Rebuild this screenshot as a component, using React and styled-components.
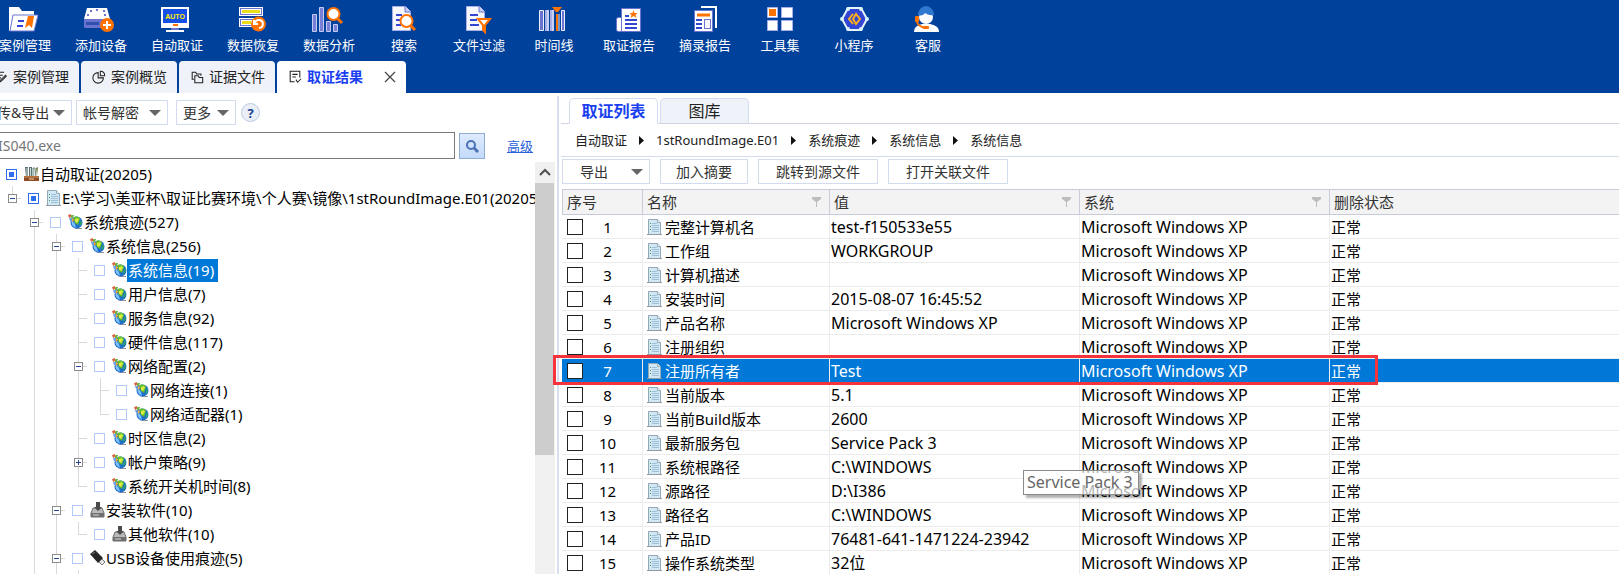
import React from 'react';
import styled, { createGlobalStyle, css } from 'styled-components';

const GlobalStyle = createGlobalStyle`
  *, *::before, *::after { box-sizing: border-box; }
  html, body { margin: 0; height: 100%; overflow: hidden; background: #fff; }
  #root { height: 100%; }
  body, button, input, table {
    font-family: "Noto Sans", "Noto Sans CJK SC", sans-serif;
  }
  button { margin: 0; padding: 0; border: 0; background: none; color: inherit; white-space: nowrap; }
`;

/* ---------- shell ---------- */

const Shell = styled.div`
  display: flex;
  flex-direction: column;
  height: 100vh;
  overflow: hidden;
  color: #222;
`;

const Header = styled.header`
  flex: none;
  overflow: hidden;
  background: #00419c;
`;

const Toolbar = styled.nav`
  display: flex;
  height: 61px;
  margin-left: -13px;
`;

const ToolButton = styled.button`
  display: flex;
  flex-direction: column;
  align-items: center;
  flex: none;
  width: ${(p) => (p.$wide ? 76 : 74)}px;
  padding-top: 6px;
  color: #fff;
  font-size: 13px;
  line-height: 20px;

  svg { width: 30px; height: 28px; overflow: visible; margin-bottom: 1px; }
`;

const TabStrip = styled.div`
  display: flex;
  gap: 2px;
  height: 32px;
  margin-left: -17px;
`;

const PageTab = styled.button`
  display: flex;
  align-items: center;
  flex: none;
  gap: 5px;
  padding: 0 10px 0 11px;
  border-radius: 4px 4px 0 0;
  background: #eff3f9;
  color: #222;
  font-size: 14px;
  line-height: 20px;

  svg { width: 14px; height: 14px; flex: none; }

  ${(p) =>
    p.$active &&
    css`
      background: #fff;
      color: #1a3ff0;
      font-weight: 700;
      svg { color: #222; }
    `}
`;

const CloseMark = styled.span`
  display: flex;
  margin: 0 -1px 0 15px;
`;

const Body = styled.div`
  display: flex;
  flex: 1;
  min-height: 0;
`;

/* ---------- left panel ---------- */

const Sidebar = styled.aside`
  display: flex;
  flex-direction: column;
  flex: none;
  width: 557px;
  min-height: 0;
  overflow: hidden;
`;

const FilterBar = styled.div`
  display: flex;
  align-items: center;
  gap: 4px;
  height: 39px;
  margin-left: -24px;
`;

const MoreGroup = styled.div`
  display: flex;
  align-items: center;
  gap: 5px;
  margin-left: 4px;
`;

const PanelButton = styled.button`
  display: flex;
  align-items: center;
  justify-content: ${(p) => (p.$menu ? 'space-between' : 'center')};
  flex: none;
  width: ${(p) => p.$width}px;
  height: 25px;
  padding: ${(p) => (p.$menu ? '0 6px' : '0')};
  border: 1px solid #d3dcee;
  background: #fff;
  color: #333;
  font-size: 14px;
  line-height: 20px;

  span {
    flex: ${(p) => (p.$centered ? 1 : 'none')};
    padding-right: ${(p) => (p.$centered ? 12 : 0)}px;
  }
  svg { width: 12px; height: 6px; fill: #666; }
`;

const HelpButton = styled.button`
  width: 19px;
  height: 19px;
  border: 1px solid #bccbe2;
  border-radius: 50%;
  background: #e9eef7;
  color: #173f8f;
  font-size: 13px;
  font-weight: 700;
  line-height: 16px;
`;

const SearchRow = styled.div`
  display: flex;
  align-items: center;
  height: 27px;
`;

const SearchInput = styled.input`
  width: 459px;
  height: 27px;
  margin-left: -4px;
  padding: 0 0 0 1px;
  border: 1px solid #7a7a7a;
  background: #fff;
  color: #777;
  font-size: 14px;
  outline: 0;
`;

const SearchButton = styled.button`
  width: 26px;
  height: 26px;
  margin: 0 22px 0 4px;
  border: 1px solid #8fadd2;
  background: linear-gradient(#dfebfd, #c3dafb);
  svg { display: block; width: 24px; height: 24px; }
`;

const AdvancedLink = styled.a`
  color: #2a62d8;
  font-size: 13px;
  line-height: 20px;
  text-decoration: underline;
`;

const TreeArea = styled.div`
  display: flex;
  flex: 1;
  min-height: 0;
  margin-top: 3px;
`;

const Tree = styled.div`
  flex: 1;
  min-width: 0;
  overflow: hidden;
`;

const TreeRow = styled.div`
  display: flex;
  align-items: center;
  height: 24px;
  padding-left: 1px;
`;

const line = 'linear-gradient(#d9d9d9, #d9d9d9)';
const guideBackground = {
  none: 'none',
  full: `${line} 11px 0 / 1px 100% no-repeat`,
  tee: `${line} 11px 0 / 1px 100% no-repeat, ${line} 11px 12px / 9px 1px no-repeat`,
  end: `${line} 11px 0 / 1px 12px no-repeat, ${line} 11px 12px / 9px 1px no-repeat`,
};

const Guide = styled.span`
  display: flex;
  align-items: center;
  flex: none;
  width: 22px;
  height: 24px;
  padding-left: 7px;
  background: ${(p) => guideBackground[p.$kind]};
`;

const Expander = styled.button`
  width: 9px;
  height: 9px;
  border: 1px solid #8c8c8c;
  background:
    linear-gradient(#24479a, #24479a) center / 5px 1px no-repeat,
    ${(p) => (p.$open ? '' : 'linear-gradient(#24479a, #24479a) center / 1px 5px no-repeat,')}
    linear-gradient(#fff, #fff);
`;

const TreeCheck = styled.input`
  appearance: none;
  flex: none;
  width: 11px;
  height: 11px;
  margin: 0 7px 0 5px;
  border: 1px solid #b4c9fb;
  background: #fff;

  &:checked {
    border-color: #2f6cf0;
    background: linear-gradient(#2f6cf0, #2f6cf0) center / 5px 5px no-repeat;
  }
`;

const NodeIcon = styled.svg`
  flex: none;
  width: 15px;
  height: 16px;
`;

const NodeLabel = styled.label`
  padding: 0 4px 0 1px;
  color: ${(p) => (p.$selected ? '#fff' : '#000')};
  background: ${(p) => (p.$selected ? '#0078d7' : 'none')};
  font-size: 15px;
  line-height: 23px;
  white-space: nowrap;
`;

const ScrollTrack = styled.div`
  display: flex;
  flex-direction: column;
  flex: none;
  width: 20px;
  margin-right: 2px;
  background: #f0f0f0;
`;

const ScrollArrow = styled.button`
  height: 21px;
  svg { display: block; width: 20px; height: 21px; }
`;

const ScrollThumb = styled.div`
  height: 66%;
  margin-right: 1px;
  background: #cdcdcd;
`;

/* ---------- right panel ---------- */

const Main = styled.main`
  display: flex;
  flex-direction: column;
  flex: 1;
  min-width: 0;
  margin-top: 3px;
  border-left: 2px solid #d6dff0;
`;

const ViewTabs = styled.div`
  display: flex;
  flex: none;
  gap: 2px;
  height: 28px;
  padding: 2px 0 0 8px;
  margin-left: 2px;
  border-bottom: 1px solid #cdd3e4;
`;

const ViewTab = styled.button`
  width: 89px;
  height: 26px;
  border: 1px solid #d3dcee;
  border-radius: 5px 5px 0 0;
  border-bottom-color: ${(p) => (p.$active ? '#fff' : '#cdd3e4')};
  background: ${(p) => (p.$active ? '#fff' : '#eff3f9')};
  color: ${(p) => (p.$active ? '#1a3ff0' : '#222')};
  font-size: 16px;
  font-weight: ${(p) => (p.$active ? 700 : 400)};
  line-height: 22px;
`;

const Breadcrumb = styled.nav`
  display: flex;
  align-items: center;
  flex: none;
  gap: 12px;
  height: 33px;
  margin-left: 2px;
  padding-left: 14px;
  border-bottom: 1px solid #d3dcee;
  color: #222;
  font-size: 13px;
  line-height: 20px;

  svg { width: 5px; height: 9px; fill: #111; }
`;

const ActionBar = styled.div`
  display: flex;
  flex: none;
  gap: 10px;
  padding: 2px 0 5px 3px;
`;

const TableArea = styled.div`
  position: relative;
  flex: 1;
  min-height: 0;
  margin-left: 3px;
`;

const DataTable = styled.table`
  width: 100%;
  table-layout: fixed;
  border-collapse: separate;
  border-spacing: 0;
  font-size: 15px;
  line-height: 20px;
`;

const HeadCell = styled.th`
  width: ${(p) => (p.$width ? `${p.$width}px` : 'auto')};
  height: 26px;
  padding: 0 0 0 4px;
  border: solid #c9cbdb;
  border-width: 1px 1px 1px 0;
  background: #f3f3f3;
  color: #333;
  font-weight: 400;
  text-align: left;

  &:first-child { border-left-width: 1px; }
  &:last-child { border-right-width: 0; }

  div { display: flex; align-items: center; justify-content: space-between; padding-right: 8px; }
  svg { width: 9px; height: 10px; fill: #bdbdbd; }
`;

const Row = styled.tr`
  color: ${(p) => (p.$selected ? '#fff' : '#000')};
  background: ${(p) => (p.$selected ? '#0078d7' : '#fff')};
`;

const Cell = styled.td`
  height: 24px;
  padding: 0 0 0 ${(p) => p.$pad || 1}px;
  border: solid #ececec;
  border-width: 0 1px 1px 0;
  font-size: ${(p) => (p.$latin ? 16 : 15)}px;
  white-space: nowrap;

  &:last-child { border-right-width: 0; }
`;

const CellFlow = styled.div`
  display: flex;
  align-items: center;
  gap: 3px;
`;

const RowCheck = styled.input`
  appearance: none;
  flex: none;
  width: 16px;
  height: 16px;
  margin: 0;
  border: 1px solid #222;
  background: #fff;
`;

const RowNumber = styled.span`
  width: 43px;
  text-align: center;
`;

const Marker = styled.div`
  position: absolute;
  top: 166px;
  left: -9px;
  width: 825px;
  height: 30px;
  border: 3px solid #f5333a;
  pointer-events: none;
`;

const Tooltip = styled.div`
  position: absolute;
  top: 281px;
  left: 461px;
  width: 116px;
  height: 25px;
  padding-left: 3px;
  border: 1px solid #8a8a8a;
  background: rgba(255, 255, 255, 0.7);
  box-shadow: 3px 3px 2px rgba(0, 0, 0, 0.3);
  color: #666;
  font-size: 16px;
  line-height: 23px;
  white-space: nowrap;
`;

/* ---------- icons ---------- */

const O = '#ff7200';
const V = '#6a74cf';
const B = '#3346d3';

const toolIcons = {
  cases: (
    <>
      <path d="M-1 1h10l3 4h12v5h4l-4 15H-1z" fill="#fff" />
      <path d="M3 9h25l-4 16H0z" fill="#fff" stroke={V} />
      <path d="M8 15h6M7 20h6" stroke={B} strokeWidth="2" />
      <path d="M18 10h6l-2 12-3-3-4 3z" fill={O} />
    </>
  ),
  addDevice: (
    <>
      <path d="M1 2h20l3 11H-2z" fill="#fff" />
      <path d="M4 5h2M10 4h2M17 5h2M1 9h2M18 9h2" stroke={V} strokeWidth="2" />
      <rect x="-2" y="13" width="26" height="9" rx="1" fill={V} />
      <rect x="0" y="16" width="13" height="3" fill="#2f4fae" />
      <circle cx="21" cy="19" r="7" fill={O} />
      <path d="M21 15v8M17 19h8" stroke="#fff" strokeWidth="2" />
    </>
  ),
  auto: (
    <>
      <rect x="-1" y="1" width="28" height="21" fill="#fff" />
      <rect x="1" y="3" width="24" height="14" fill="#1450e6" />
      <text x="13" y="13" fill="#ffee00" fontSize="7" fontWeight="700" textAnchor="middle" fontFamily="Liberation Sans, sans-serif">AUTO</text>
      <path d="M11 19h5" stroke={O} strokeWidth="2" />
      <path d="M9 22h8v2H9z" fill={V} />
      <path d="M4 25h18" stroke="#fff" strokeWidth="2" />
    </>
  ),
  restore: (
    <>
      <rect x="1.500" y="1.500" width="23" height="8" fill={V} stroke="#fff" />
      <rect x="3" y="3" width="20" height="5" fill="#fff" />
      <path d="M4 5.500h18" stroke="#e9dc18" strokeWidth="3" />
      <rect x="1.500" y="12.500" width="23" height="8" fill={V} stroke="#fff" />
      <rect x="3" y="14" width="20" height="5" fill="#fff" />
      <path d="M4 16.500h9" stroke="#e9dc18" strokeWidth="3" />
      <circle cx="20.500" cy="18" r="7.500" fill={O} />
      <path d="M17 17a4 4 0 1 1 4 5M16 14v4h4" fill="none" stroke="#fff" strokeWidth="2" />
    </>
  ),
  analysis: (
    <>
      <g fill="#7780d6" stroke="#c5caf2">
        <path d="M-1.500 8.500h4v17h-4zM5.500 1.500h4v24h-4zM12.500 15.500h4v10h-4zM19.500 18.500h4v7h-4z" />
      </g>
      <path d="M23 12l5 5" stroke={O} strokeWidth="3" />
      <circle cx="19.500" cy="8" r="6" fill="#fff" stroke={O} strokeWidth="2" />
    </>
  ),
  search: (
    <>
      <path d="M3.500.5h13l5 5v19h-18z" fill="#f6f7fd" stroke="#a9b0e8" />
      <path d="M16 0v6h6" fill="#c9cef3" stroke={V} />
      <path d="M7 9h6M7 14h5M7 19h5" stroke={B} strokeWidth="2" />
      <path d="M21 19l5 5" stroke={O} strokeWidth="3" />
      <circle cx="17.500" cy="15" r="6" fill="#fff" stroke={O} strokeWidth="2" />
    </>
  ),
  filter: (
    <>
      <path d="M2.500.5h13l5 5v19h-18z" fill="#f6f7fd" stroke="#a9b0e8" />
      <path d="M15 0v6h6" fill="#c9cef3" stroke={V} />
      <path d="M6 9h8M6 14h7M6 19h9" stroke={B} strokeWidth="2" />
      <path d="M14 13h12l-5 6v7l-2-2v-5z" fill="#fff" stroke={O} strokeWidth="2" />
    </>
  ),
  timeline: (
    <>
      <g fill={V} stroke="#eef0fd">
        <path d="M.5 4.500h4v20h-4zM22.500 4.500h3v20h-3z" />
      </g>
      <path d="M8 4v21M13 4v21" stroke="#a9b0e8" strokeWidth="4" />
      <path d="M9 4v21M14 4v21M20 8v17" stroke="#eef0fd" />
      <path d="M13 1h10l-4 5h-2z" fill={O} />
      <path d="M18 8v17" stroke={O} strokeWidth="2" />
    </>
  ),
  report: (
    <>
      <rect x="2.500" y="11.500" width="7" height="14" rx="2" fill="#fff" stroke={V} />
      <rect x="7.500" y="2.500" width="19" height="23" fill="#fff" stroke={V} />
      <path d="M19.500 4l1 3h3l-2 2 1 3-3-2-3 2 1-3-2-2h3z" fill={O} />
      <path d="M11 10h4M11 14h12M11 18h12M11 22h12" stroke={B} strokeWidth="2" />
    </>
  ),
  excerpt: (
    <>
      <path d="M11 1h15v21" fill="none" stroke="#fff" strokeWidth="2" />
      <rect x="4.500" y="4.500" width="18" height="21" fill="#fff" stroke={V} />
      <path d="M7 9h13" stroke={O} strokeWidth="3" />
      <path d="M6 14h6M6 18h6M6 22h6" stroke={B} strokeWidth="2" />
      <rect x="14.500" y="13.500" width="6" height="9" fill="#f4f5fd" stroke={V} />
    </>
  ),
  tools: (
    <>
      <g fill="#fff" stroke="#a9b0e8">
        <path d="M2.500 1.500h10v10h-10zM16.500 1.500h11v10h-11zM2.500 14.500h10v10h-10zM16.500 14.500h11v10h-11z" />
      </g>
      <rect x="4" y="3" width="7" height="7" fill={O} />
    </>
  ),
  mini: (
    <>
      <path d="M9 2h13l6 11-6 11H9L3 13z" fill={B} stroke="#e6f6fd" strokeWidth="2" />
      <g fill="#d8f3fc">
        <circle cx="9" cy="3" r="2" /><circle cx="22" cy="3" r="2" /><circle cx="28" cy="13" r="2" />
        <circle cx="22" cy="23" r="2" /><circle cx="9" cy="23" r="2" /><circle cx="3" cy="13" r="2" />
      </g>
      <path d="M14 8l-4 5 4 5M17 8l-3 5 3 5 4-5z" fill="none" stroke="#ffae1a" strokeWidth="2" />
    </>
  ),
  service: (
    <>
      <circle cx="13" cy="11" r="7" fill="#fff" />
      <path d="M5 9a8 9 0 0 1 16 0c-4 1-7-1-9-2-1 2-4 3-7 2z" fill="#2f79d0" />
      <path d="M1 26c0-5 4-7 8-8h8c5 1 9 3 9 8z" fill="#fff" />
      <rect x="2" y="10" width="4" height="6" rx="1" fill={O} />
      <path d="M4 16c1 4 4 5 8 6" fill="none" stroke={O} strokeWidth="2" />
      <rect x="10" y="20" width="6" height="3" rx="1" fill={O} />
    </>
  ),
};

const tabIcons = {
  edit: <path d="M2.500 13.500v-11h9M5 6h5M5 9h3M13 6l-6 6-1 2 2-1 6-6z" />,
  pie: <path d="M7 3a6 6 0 1 0 6 6H7zM9.500 1.500c3 0 5 2 5 5h-5z" />,
  folders: <path d="M4.500 10.500h-2v-8h4l1 2h5v2M5.500 6.500h4l1 2h4v6h-9z" />,
  result: <path d="M13.500 8.500v-7h-11v12h5M5 5h6M5 8h4M9 11l2 3 4-4" />,
};

const TabIcon = ({ name }) => (
  <svg viewBox="0 0 16 16" fill="none" stroke="currentColor" strokeWidth="1.200">{tabIcons[name]}</svg>
);

const Caret = () => <svg viewBox="0 0 12 6"><path d="M0 0h12L6 6z" /></svg>;

const DocDrawing = () => (
  <NodeIcon viewBox="0 0 15 16">
    <path d="M1.500.5h9l3 3v12h-12z" fill="#d3e8f5" stroke="#93a9b8" />
    <path d="M10.500.5v3h3" fill="#f6fbfe" stroke="#93a9b8" />
    <path d="M3 4.500h1M3 7.500h1M3 10.500h1" stroke="#3f9a54" />
    <path d="M5 4.500h5M5 6.500h7M5 8.500h7M5 10.500h7M5 12.500h7" stroke="#9dbfd6" />
    <path d="M0 15.500h15" stroke="#8f9aa3" />
  </NodeIcon>
);

const nodeDrawings = {
  books: (
    <NodeIcon viewBox="0 0 15 16">
      <path d="M1 1h3v10H2zM5 1h3v10H5z" fill="#587074" />
      <path d="M9 2h2l1 9H9z" fill="#dce4dd" stroke="#6f8a84" />
      <path d="M12 2l2-1-1 9z" fill="#6d7b3b" />
      <path d="M3 2v8M6.500 2v8" stroke="#cfe0d6" />
      <path d="M0 10h15v5H0z" fill="#8f4c22" />
      <path d="M0 11h15" stroke="#d79a61" />
      <path d="M5 13h5" stroke="#f1d2a8" />
    </NodeIcon>
  ),
  doc: <DocDrawing />,
  globe: (
    <NodeIcon viewBox="0 0 15 16">
      <path d="M6 14h8v1H8z" fill="#8c9196" />
      <circle cx="8.500" cy="8.500" r="6" fill="#1f6fd0" />
      <path d="M4 6a6 6 0 0 0 1 6l3 2-1-4z" fill="#7cc0f5" />
      <path d="M6 3c3-1 6 0 6 2l-1 3-1 3-3-2-1-3z" fill="#5fbd2b" />
      <path d="M7 5l3-1 1 2-2 3-2-1z" fill="#d9ea3c" />
      <path d="M13 6l1 2-1 3-2 1z" fill="#2fa75c" />
      <path d="M0 1l3-1v3L1 4z" fill="#d9684a" />
      <path d="M3 1l3 0-1 3H3z" fill="#6db545" />
      <path d="M1 4l3 0v3L2 7z" fill="#6b9fdc" />
      <path d="M4 4l2 1-1 3-1-1z" fill="#f0a52e" />
    </NodeIcon>
  ),
  drive: (
    <NodeIcon viewBox="0 0 15 16">
      <path d="M3 6h9l2 5v4H1v-4z" fill="#b9b9b9" stroke="#6f6f6f" />
      <path d="M1 11h13v4H1z" fill="#6f6f6f" />
      <path d="M3 13h6" stroke="#d8d8d8" />
      <path d="M6 0h4v5h2l-4 4-4-4h2z" fill="#4a4a4a" />
    </NodeIcon>
  ),
  usb: (
    <NodeIcon viewBox="0 0 15 16">
      <path d="M0 4l5-4 8 8-5 5z" fill="#262626" />
      <path d="M2 4l3-2" stroke="#777" />
      <path d="M9 12l3-3 3 3-3 3z" fill="#e6e6e6" stroke="#777" />
    </NodeIcon>
  ),
};

/* ---------- data ---------- */

const tools = [
  ['案例管理', 'cases'], ['添加设备', 'addDevice'], ['自动取证', 'auto'], ['数据恢复', 'restore'],
  ['数据分析', 'analysis'], ['搜索', 'search'], ['文件过滤', 'filter'], ['时间线', 'timeline'],
  ['取证报告', 'report'], ['摘录报告', 'excerpt'], ['工具集', 'tools'], ['小程序', 'mini'], ['客服', 'service'],
];

/* guides: one letter per column — n none, f full line, t branch, e last branch */
const kinds = { n: 'none', f: 'full', t: 'tee', e: 'end' };

const nodes = [
  { guides: '', icon: 'books', label: '自动取证(20205)', checked: true },
  { guides: 'e', icon: 'doc', label: 'E:\\学习\\美亚杯\\取证比赛环境\\个人赛\\镜像\\1stRoundImage.E01(20205)', checked: true, toggle: 'open' },
  { guides: 'nt', icon: 'globe', label: '系统痕迹(527)', toggle: 'open' },
  { guides: 'nft', icon: 'globe', label: '系统信息(256)', toggle: 'open' },
  { guides: 'nfft', icon: 'globe', label: '系统信息(19)', selected: true },
  { guides: 'nfft', icon: 'globe', label: '用户信息(7)' },
  { guides: 'nfft', icon: 'globe', label: '服务信息(92)' },
  { guides: 'nfft', icon: 'globe', label: '硬件信息(117)' },
  { guides: 'nfft', icon: 'globe', label: '网络配置(2)', toggle: 'open' },
  { guides: 'nffft', icon: 'globe', label: '网络连接(1)' },
  { guides: 'nfffe', icon: 'globe', label: '网络适配器(1)' },
  { guides: 'nfft', icon: 'globe', label: '时区信息(2)' },
  { guides: 'nfft', icon: 'globe', label: '帐户策略(9)', toggle: 'closed' },
  { guides: 'nffe', icon: 'globe', label: '系统开关机时间(8)' },
  { guides: 'nft', icon: 'drive', label: '安装软件(10)', toggle: 'open' },
  { guides: 'nffe', icon: 'drive', label: '其他软件(10)' },
  { guides: 'nft', icon: 'usb', label: 'USB设备使用痕迹(5)', toggle: 'open' },
];

const crumbs = ['自动取证', '1stRoundImage.E01', '系统痕迹', '系统信息', '系统信息'];

const columns = [
  { title: '序号', width: 81 },
  { title: '名称', width: 187, filter: true },
  { title: '值', width: 250, filter: true },
  { title: '系统', width: 250, filter: true },
  { title: '删除状态' },
];

const records = [
  ['完整计算机名', 'test-f150533e55'],
  ['工作组', 'WORKGROUP'],
  ['计算机描述', ''],
  ['安装时间', '2015-08-07 16:45:52'],
  ['产品名称', 'Microsoft Windows XP'],
  ['注册组织', ''],
  ['注册所有者', 'Test'],
  ['当前版本', '5.1'],
  ['当前Build版本', '2600'],
  ['最新服务包', 'Service Pack 3'],
  ['系统根路径', 'C:\\WINDOWS'],
  ['源路径', 'D:\\I386'],
  ['路径名', 'C:\\WINDOWS'],
  ['产品ID', '76481-641-1471224-23942'],
  ['操作系统类型', '32位'],
];

/* ---------- parts ---------- */

const TreeNode = ({ node, id }) => (
  <TreeRow>
    {[...node.guides].map((g, i) => (
      <Guide key={i} $kind={kinds[g]}>
        {node.toggle && i === node.guides.length - 1 && (
          <Expander $open={node.toggle === 'open'} aria-label={`${node.label} 展开/折叠`} />
        )}
      </Guide>
    ))}
    <TreeCheck type="checkbox" id={id} defaultChecked={node.checked} />
    {nodeDrawings[node.icon]}
    <NodeLabel htmlFor={id} $selected={node.selected}>{node.label}</NodeLabel>
  </TreeRow>
);

export default function App() {
  return (
    <Shell>
      <GlobalStyle />
      <Header>
        <Toolbar>
          {tools.map(([label, icon]) => (
            <ToolButton key={label} $wide={label.length > 3}>
              <svg viewBox="0 0 30 28">{toolIcons[icon]}</svg>
              {label}
            </ToolButton>
          ))}
        </Toolbar>
        <TabStrip>
          <PageTab><TabIcon name="edit" />案例管理</PageTab>
          <PageTab><TabIcon name="pie" />案例概览</PageTab>
          <PageTab><TabIcon name="folders" />证据文件</PageTab>
          <PageTab $active>
            <TabIcon name="result" />取证结果
            <CloseMark>
              <svg viewBox="0 0 14 14" stroke="#444" strokeWidth="1.200"><path d="M2 2l10 10M12 2L2 12" /></svg>
            </CloseMark>
          </PageTab>
        </TabStrip>
      </Header>

      <Body>
        <Sidebar>
          <FilterBar>
            <PanelButton $menu $width={96}><span>上传&amp;导出</span><Caret /></PanelButton>
            <PanelButton $menu $width={92}><span>帐号解密</span><Caret /></PanelButton>
            <MoreGroup>
              <PanelButton $menu $width={60}><span>更多</span><Caret /></PanelButton>
              <HelpButton>?</HelpButton>
            </MoreGroup>
          </FilterBar>
          <SearchRow>
            <SearchInput aria-label="搜索" defaultValue="IS040.exe" />
            <SearchButton aria-label="搜索">
              <svg viewBox="0 0 24 24" fill="none" stroke="#4a72b4">
                <circle cx="11" cy="11" r="4" strokeWidth="2" />
                <path d="M14 14l4 4" strokeWidth="3" />
              </svg>
            </SearchButton>
            <AdvancedLink href="#advanced">高级</AdvancedLink>
          </SearchRow>
          <TreeArea>
            <Tree>
              {nodes.map((node, i) => <TreeNode key={i} node={node} id={`node-${i}`} />)}
              <TreeRow>{['none', 'full', 'full', 'full'].map((k, i) => <Guide key={i} $kind={k} />)}</TreeRow>
            </Tree>
            <ScrollTrack>
              <ScrollArrow aria-label="向上滚动">
                <svg viewBox="0 0 20 21" fill="none" stroke="#505050" strokeWidth="2"><path d="M5 13l5-5 5 5" /></svg>
              </ScrollArrow>
              <ScrollThumb />
            </ScrollTrack>
          </TreeArea>
        </Sidebar>

        <Main>
          <ViewTabs>
            <ViewTab $active>取证列表</ViewTab>
            <ViewTab>图库</ViewTab>
          </ViewTabs>
          <Breadcrumb>
            {crumbs.map((crumb, i) => (
              <React.Fragment key={i}>
                {i > 0 && <svg viewBox="0 0 5 9"><path d="M0 0l5 4.500L0 9z" /></svg>}
                <span>{crumb}</span>
              </React.Fragment>
            ))}
          </Breadcrumb>
          <ActionBar>
            <PanelButton $menu $centered $width={88}><span>导出</span><Caret /></PanelButton>
            <PanelButton $width={88}>加入摘要</PanelButton>
            <PanelButton $width={120}>跳转到源文件</PanelButton>
            <PanelButton $width={120}>打开关联文件</PanelButton>
          </ActionBar>
          <TableArea>
            <DataTable>
              <thead>
                <tr>
                  {columns.map((col) => (
                    <HeadCell key={col.title} $width={col.width}>
                      <div>
                        {col.title}
                        {col.filter && <svg viewBox="0 0 9 10"><path d="M0 0h9v2L5 5v5H4V5L0 2z" /></svg>}
                      </div>
                    </HeadCell>
                  ))}
                </tr>
              </thead>
              <tbody>
                {records.map(([name, value], i) => (
                  <Row key={i} $selected={i === 6}>
                    <Cell $pad={5}>
                      <CellFlow>
                        <RowCheck type="checkbox" aria-label={name} />
                        <RowNumber>{i + 1}</RowNumber>
                      </CellFlow>
                    </Cell>
                    <Cell $pad={4}><CellFlow><DocDrawing />{name}</CellFlow></Cell>
                    <Cell $latin>{value}</Cell>
                    <Cell $latin>Microsoft Windows XP</Cell>
                    <Cell>正常</Cell>
                  </Row>
                ))}
              </tbody>
            </DataTable>
            <Marker />
            <Tooltip role="tooltip">Service Pack 3</Tooltip>
          </TableArea>
        </Main>
      </Body>
    </Shell>
  );
}
